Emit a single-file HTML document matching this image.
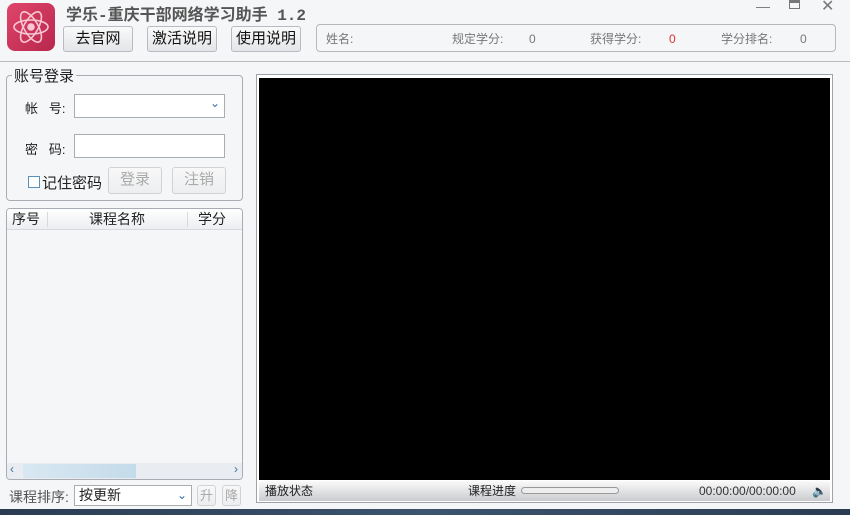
<!DOCTYPE html>
<html><head><meta charset="utf-8"><style>
*{margin:0;padding:0;box-sizing:border-box}
body{width:850px;height:515px;overflow:hidden;background:#f5f6f8;font-family:"Liberation Sans","Noto Sans CJK SC",sans-serif;font-size:14px;color:#222;position:relative}
.a{position:absolute}
.btn{position:absolute;border:1px solid #b8bcc2;border-radius:3px;background:linear-gradient(#fafafa,#e3e5e8);text-align:center;font-size:15px;line-height:24px;color:#111}
.dis{color:#aaa;border-color:#d0d3d6;background:linear-gradient(#f8f8f8,#eceef0)}
.inp{position:absolute;background:#fff;border:1px solid #a9adb3}
</style></head><body>
<div class="a" style="left:7px;top:3px;width:48px;height:48px;border-radius:8px;background:linear-gradient(135deg,#e0456a,#b8274d)">
<svg width="48" height="48" viewBox="0 0 48 48" fill="none" stroke="#f6c8d4" stroke-width="1.6"><ellipse cx="24" cy="24" rx="17" ry="7"/><ellipse cx="24" cy="24" rx="17" ry="7" transform="rotate(60 24 24)"/><ellipse cx="24" cy="24" rx="17" ry="7" transform="rotate(-60 24 24)"/><circle cx="24" cy="24" r="3" fill="#f6c8d4"/></svg></div>
<div class="a" style="left:66px;top:1px;font-size:16px;font-weight:bold;color:#555;font-family:'Liberation Mono','Noto Sans CJK SC',monospace">学乐-重庆干部网络学习助手 1.2</div>
<div class="a" style="left:756px;top:-2px;color:#777;font-size:14px">—</div>
<div class="a" style="left:789px;top:0px;width:11px;height:9px;border:1px solid #777;border-top-width:3px"></div>
<div class="a" style="left:821px;top:-4px;color:#777;font-size:16px">✕</div>
<div class="btn" style="left:63px;top:26px;width:70px;height:26px">去官网</div>
<div class="btn" style="left:147px;top:26px;width:70px;height:26px">激活说明</div>
<div class="btn" style="left:231px;top:26px;width:70px;height:26px">使用说明</div>
<div class="a" style="left:316px;top:24px;width:520px;height:28px;border:1px solid #b5b9be;border-radius:4px;font-size:12px;color:#777;line-height:28px">
<span class="a" style="left:9px">姓名:</span><span class="a" style="left:135px">规定学分:</span><span class="a" style="left:212px">0</span><span class="a" style="left:273px">获得学分:</span><span class="a" style="left:352px;color:#d33">0</span><span class="a" style="left:404px">学分排名:</span><span class="a" style="left:483px">0</span></div>
<div class="a" style="left:0;top:61px;width:850px;height:1px;background:#b8bcc1"></div>
<div class="a" style="left:6px;top:75px;width:237px;height:126px;border:1px solid #a9adb3;border-radius:4px"></div>
<div class="a" style="left:12px;top:65px;background:#f5f6f8;font-size:15px;padding:0 2px">账号登录</div>
<div class="a" style="left:25px;top:98px;font-size:13px">帐&nbsp;&nbsp;&nbsp;号:</div>
<div class="inp" style="left:74px;top:94px;width:151px;height:24px"><span class="a" style="right:4px;top:1px;color:#3a6ea5;font-size:12px">⌄</span></div>
<div class="a" style="left:25px;top:139px;font-size:13px">密&nbsp;&nbsp;&nbsp;码:</div>
<div class="inp" style="left:74px;top:134px;width:151px;height:24px"></div>
<div class="a" style="left:28px;top:176px;width:12px;height:12px;border:1px solid #5a8fb8;background:#fff"></div>
<div class="a" style="left:42px;top:172px;font-size:15px">记住密码</div>
<div class="btn dis" style="left:108px;top:167px;width:54px;height:27px">登录</div>
<div class="btn dis" style="left:172px;top:167px;width:54px;height:27px">注销</div>
<div class="a" style="left:6px;top:208px;width:237px;height:272px;border:1px solid #a9adb3;border-radius:4px;background:#f5f6f8;overflow:hidden">
<div class="a" style="left:0;top:0;width:235px;height:21px;background:linear-gradient(#fff,#eceef1);border-bottom:1px solid #d6d9dd;font-size:14px;line-height:21px">
<span class="a" style="left:5px">序号</span><span class="a" style="left:40px;top:3px;width:1px;height:15px;background:#d6d9dd"></span><span class="a" style="left:82px">课程名称</span><span class="a" style="left:180px;top:3px;width:1px;height:15px;background:#d6d9dd"></span><span class="a" style="left:191px">学分</span></div>
<div class="a" style="left:0;top:254px;width:235px;height:16px;background:#e9edf1"><div class="a" style="left:16px;top:1px;width:113px;height:14px;background:linear-gradient(90deg,#d9e8f2,#c4dbe9)"></div><span class="a" style="left:3px;top:-1px;color:#3a6ea5;font-size:12px">‹</span><span class="a" style="right:4px;top:-1px;color:#3a6ea5;font-size:12px">›</span></div></div>
<div class="a" style="left:9px;top:487px;font-size:14px;color:#555">课程排序:</div>
<div class="inp" style="left:74px;top:485px;width:118px;height:21px;font-size:14px;line-height:19px;padding-left:4px">按更新<span class="a" style="right:4px;top:0;color:#3a6ea5;font-size:12px">⌄</span></div>
<div class="btn dis" style="left:197px;top:485px;width:19px;height:21px;font-size:13px;line-height:19px">升</div>
<div class="btn dis" style="left:222px;top:485px;width:19px;height:21px;font-size:13px;line-height:19px">降</div>
<div class="a" style="left:256px;top:74px;width:577px;height:429px;border:1px solid #9fa3a8;background:#fff"></div>
<div class="a" style="left:259px;top:78px;width:571px;height:402px;background:#000"></div>
<div class="a" style="left:259px;top:481px;width:571px;height:20px;background:linear-gradient(#fafafa,#c9cbce);font-size:12px;line-height:20px">
<span class="a" style="left:6px">播放状态</span><span class="a" style="left:209px">课程进度</span>
<span class="a" style="left:262px;top:6px;width:98px;height:7px;border:1px solid #999;border-radius:4px;background:#eee"></span>
<span class="a" style="left:440px;color:#333">00:00:00/00:00:00</span><span class="a" style="left:553px;font-size:12px">🔈</span></div>
<div class="a" style="left:0;top:509px;width:850px;height:6px;background:linear-gradient(90deg,#2b3c52,#3c546e,#2b3c52)"></div>
</body></html>
